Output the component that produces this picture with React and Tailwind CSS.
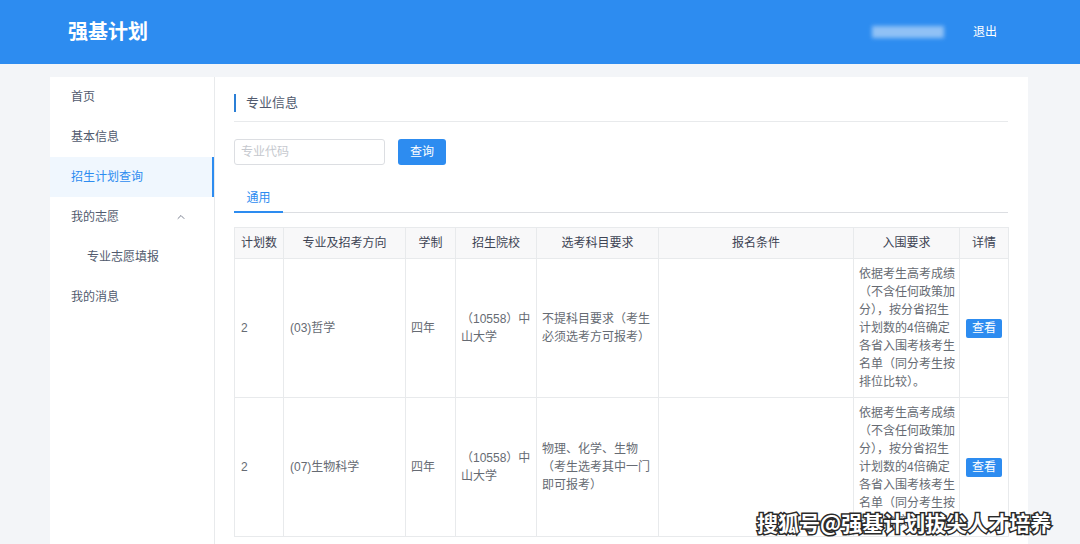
import React from "react";
import { ChevronUp } from "lucide-react";

const font = { fontFamily: '"Liberation Sans", "Noto Sans CJK SC", sans-serif' };

const cols = [49, 122, 50, 81, 122, 195, 106, 49];
const heads = ["计划数", "专业及招考方向", "学制", "招生院校", "选考科目要求", "报名条件", "入围要求", "详情"];

const req = ["依据考生高考成绩", "（不含任何政策加", "分），按分省招生", "计划数的4倍确定", "各省入围考核考生", "名单（同分考生按", "排位比较）。"];

const rows = [
  { n: "2", major: "(03)哲学", subj: ["不提科目要求（考生", "必须选考方可报考）"] },
  { n: "2", major: "(07)生物科学", subj: ["物理、化学、生物", "（考生选考其中一门", "即可报考）"] },
];

function Lines({ lines }) {
  return (
    <div>
      {lines.map((l, i) => (
        <div key={i} className="whitespace-nowrap">{l}</div>
      ))}
    </div>
  );
}

export default function App() {
  return (
    <div className="relative w-[1080px] h-[544px] overflow-hidden bg-[#f3f5f8] text-[#515a6e]" style={font}>
      <header className="h-[64px] bg-[#2d8cf0] flex items-center pl-[68px] pr-[83px]">
        <div className="text-white text-[20px] font-bold">强基计划</div>
        <div className="ml-auto flex items-center">
          <span className="w-[72px] h-[12px] bg-[#a9cff7] blur-[2px] opacity-80"></span>
          <span className="ml-[29px] text-white text-[12px]">退出</span>
        </div>
      </header>

      <div className="flex pl-[50px] pt-[13px] h-[480px]">
        <aside className="w-[165px] bg-white border-r border-[#e8eaec] text-[12px] text-[#515a6e]">
          <div className="h-[40px] flex items-center pl-[21px]">首页</div>
          <div className="h-[40px] flex items-center pl-[21px]">基本信息</div>
          <div className="h-[40px] flex items-center pl-[21px] bg-[#f0f7fe] text-[#2d8cf0] border-r-2 border-[#2d8cf0]">招生计划查询</div>
          <div className="h-[40px] flex items-center pl-[21px] pr-[27px]">
            <span>我的志愿</span>
            <ChevronUp className="ml-auto" size={12} strokeWidth={1.5} />
          </div>
          <div className="h-[40px] flex items-center pl-[37px]">专业志愿填报</div>
          <div className="h-[40px] flex items-center pl-[21px]">我的消息</div>
        </aside>

        <main className="w-[813px] bg-white pl-[19px] pr-[20px] pt-[17px]">
          <div className="border-b border-[#e8eaec] pb-[9px]">
            <div className="flex items-center h-[18px] border-l-2 border-[#2b7fd6] pl-[10px] text-[13px] text-[#515a6e]">专业信息</div>
          </div>

          <div className="flex items-center mt-[17px] h-[26px]">
            <div className="w-[151px] h-[26px] border border-[#dcdee2] rounded-[3px] flex items-center pl-[6px] text-[12px] text-[#c5c8ce]">专业代码</div>
            <button className="ml-[13px] w-[48px] h-[26px] bg-[#2d8cf0] rounded-[3px] text-white text-[12px]">查询</button>
          </div>

          <div className="mt-[20px] border-b border-[#dcdee2] flex">
            <div className="w-[49px] h-[28px] flex items-center justify-center text-[12px] text-[#2d8cf0] border-b-2 border-[#2d8cf0] -mb-px">通用</div>
          </div>

          <table className="mt-[14px] border-collapse text-[12px] table-fixed w-[774px]">
            <colgroup>
              {cols.map((w, i) => (
                <col key={i} style={{ width: w }} />
              ))}
            </colgroup>
            <thead>
              <tr className="h-[31px] bg-[#f8f8f9]">
                {heads.map((h) => (
                  <th key={h} className="border border-[#e8eaec] font-normal text-[#3e4454] text-center">{h}</th>
                ))}
              </tr>
            </thead>
            <tbody className="text-[#666b73] leading-[18px]">
              {rows.map((r, i) => (
                <tr key={i} className="h-[139px]">
                  <td className="border border-[#e8eaec] px-[6px]">{r.n}</td>
                  <td className="border border-[#e8eaec] px-[6px]">{r.major}</td>
                  <td className="border border-[#e8eaec] px-[5px]">四年</td>
                  <td className="border border-[#e8eaec] px-[5px]"><Lines lines={["（10558）中", "山大学"]} /></td>
                  <td className="border border-[#e8eaec] px-[5px]"><Lines lines={r.subj} /></td>
                  <td className="border border-[#e8eaec]"></td>
                  <td className="border border-[#e8eaec] px-[5px] py-[6px]"><Lines lines={req} /></td>
                  <td className="border border-[#e8eaec] text-center">
                    <button className="w-[36px] h-[19px] bg-[#2d8cf0] rounded-[2px] text-white text-[12px] leading-[19px]">查看</button>
                  </td>
                </tr>
              ))}
            </tbody>
          </table>
        </main>
      </div>

      <div
        className="absolute left-[757px] top-[507px] text-[21px] font-bold text-white whitespace-nowrap [-webkit-text-stroke:3px_#2a2a2a] [paint-order:stroke_fill]"
        style={{ fontFamily: '"Noto Sans CJK SC", sans-serif' }}
      >
        搜狐号@强基计划拔尖人才培养
      </div>
    </div>
  );
}
